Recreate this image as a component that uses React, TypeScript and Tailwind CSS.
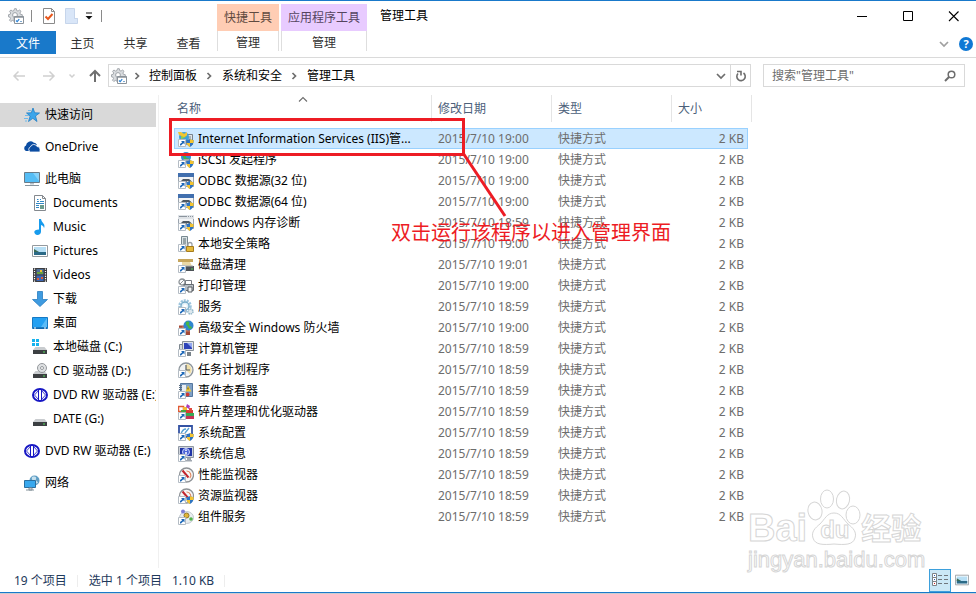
import type { ReactNode } from "react";

const Svg = ({ children, box = "0 0 16 16", className = "h-4 w-4" }: { children: ReactNode; box?: string; className?: string }) => (
  <svg viewBox={box} className={`shrink-0 ${className}`} fill="none" aria-hidden="true">
    {children}
  </svg>
);

/* ---------- shared icon parts ---------- */

const Shortcut = () => (
  <g>
    <path d="M.5 8.500h7v7h-7z" fill="#fff" stroke="#b4bcc4" />
    <path d="M3 10h3.500v3.500l-1.200-1.200L3 14.500H2V13l2.200-1.800z" fill="#1d68b8" />
  </g>
);

const Shield = () => (
  <g>
    <path d="M12 8c1 .8 2.200 1 3.700 1 0 3.600-1 5.600-3.700 7-2.700-1.400-3.700-3.400-3.700-7 1.500 0 2.700-.2 3.700-1z" fill="#2f74c0" />
    <path d="M12 8c1 .8 2.200 1 3.700 1l-.2 3H12zM12 12v4c-2-1-3.100-2.200-3.500-4z" fill="#f4c430" />
  </g>
);

const AdminGear = () => (
  <Svg>
    <path
      d="M6.500.7h1.800l.4 1.900 1.300.5 1.700-1.100 1.300 1.300-1.100 1.700.5 1.300 1.900.4V9H6v4.300l-1.600-.9-1.600 1.100-1.300-1.300 1-1.700-.5-1.300-1.500-.4V6.700l1.600-.4.6-1.300-1.100-1.700L2.900 2l1.700 1.100 1.300-.5z"
      fill="#d9dcdf"
      stroke="#9da2a7"
      strokeWidth=".9"
    />
    <circle cx="7" cy="7" r="2.400" fill="#fff" stroke="#9da2a7" />
    <path d="M6.500 8.500h9v7h-9z" fill="#fff" stroke="#8b9299" />
    <path d="M6.500 9h9" stroke="#8b9299" strokeWidth="1.500" />
    <path d="M8 12.500l1.200 1.200 2-2.500" stroke="#2b83d6" strokeWidth="1.200" />
    <path d="M12 13.500h2" stroke="#7fa9d0" />
  </Svg>
);

const Chevron = ({ dir, className }: { dir: "right" | "down" | "up"; className: string }) => (
  <Svg box="0 0 10 10" className={`h-[10px] w-[10px] ${className}`}>
    <path
      d={dir === "right" ? "M3.500 2l3 3-3 3" : dir === "down" ? "M1 3l4 4 4-4" : "M1 6.500l4-4 4 4"}
      stroke="currentColor"
      strokeWidth={dir === "up" ? 1.1 : 1.7}
    />
  </Svg>
);

/* ---------- file icons ---------- */

const WindowFrame = ({ bar }: { bar: string }) => (
  <g>
    <path d="M.5.5h15v13H.5z" fill="#f2f4f6" stroke="#9aa3ad" />
    <path d="M0 0h16v4H0z" fill={bar} />
    <path d="M3 8l2-2h6l3 2.500-2 .5-3-1-1 2-2-1z" fill="#4d5863" />
  </g>
);

const Dial = () => (
  <g>
    <circle cx="8.500" cy="8" r="7" fill="#f7f7f7" stroke="#8e9296" strokeWidth="1.300" />
    <path d="M8.500 4a4.200 4.200 0 0 1 3.300 7" stroke="#e08a62" strokeWidth="1.200" />
    <path d="M4.500 3.500l6 7" stroke="#c2242c" strokeWidth="2" />
  </g>
);

const fileArt: Record<string, ReactNode> = {
  iis: (
    <>
      <path d="M8.500 3.500h6v10h-6z" fill="#dfe5e9" stroke="#77838d" />
      <path d="M10 6h3M10 8h3" stroke="#77838d" />
      <circle cx="6" cy="6" r="5" fill="#3fa0dc" />
      <path d="M3 3c3-1 5 0 5 2S4 7 3 9z" fill="#8fcb4e" />
      <path d="M0 1h3l3 2 3-2v3.500L6 6 1 4z" fill="#f4c430" />
      <Shortcut />
      <Shield />
    </>
  ),
  iscsi: (
    <>
      <circle cx="8" cy="5" r="5" fill="#3390d6" />
      <path d="M5 1c3-.5 4 1 3 3s2 2 4 3c-2 3-4 3-5 1S4 5 5 1z" fill="#42b54a" />
      <path d="M5 7h6l2 4-3 2z" fill="#9aa7b2" />
      <Shortcut />
      <Shield />
    </>
  ),
  odbc: (
    <>
      <WindowFrame bar="#416fae" />
      <Shortcut />
      <Shield />
    </>
  ),
  memory: (
    <>
      <WindowFrame bar="#dfe3e7" />
      <path d="M1 1.500h8M10 1.500h1M12 1.500h1M14 1.500h1" stroke="#8b949d" />
      <Shortcut />
      <Shield />
    </>
  ),
  policy: (
    <>
      <path d="M3.500.5h6v12h-6z" fill="#dbe3e6" stroke="#788990" />
      <path d="M5 3h3M5 5h3M5 7h3" stroke="#55666d" />
      <path d="M10 10.500V8.500a2 2 0 0 1 4 0v2" stroke="#9aa0a5" strokeWidth="1.300" />
      <path d="M8.500 10.500h7v5h-7z" fill="#e5b93a" stroke="#a67c1e" />
      <Shortcut />
    </>
  ),
  cleanup: (
    <>
      <path d="M0 2h15v3H0z" fill="#c6a65c" />
      <path d="M4 5h8l2 4H4z" fill="#e9d8a7" />
      <path d="M7 9h9v5H7z" fill="#4d5257" />
      <path d="M8 9h7" stroke="#aab0b5" />
      <path d="M13 12h2" stroke="#55d05b" />
      <Shortcut />
    </>
  ),
  print: (
    <>
      <circle cx="4" cy="4" r="3" fill="#fff" stroke="#8b9196" strokeWidth="1.300" />
      <path d="M2 6l4-4" stroke="#8b9196" />
      <path d="M7.500 2.500h6v4h-6z" fill="#fff" stroke="#777d83" />
      <path d="M6 6.500h9.500v6H6z" fill="#b8bfc5" stroke="#666d73" />
      <path d="M10 9h4v5h-4z" fill="#f1f3f4" stroke="#565d63" />
      <Shortcut />
    </>
  ),
  services: (
    <>
      <circle cx="7" cy="7" r="5.500" stroke="#9cc4dd" strokeWidth="2.500" strokeDasharray="2 1" />
      <circle cx="7" cy="7" r="4" fill="#e0eff7" stroke="#76abc9" strokeWidth="1.300" />
      <circle cx="7" cy="7" r="1.800" fill="#fff" />
      <circle cx="12.500" cy="12.500" r="2.500" fill="#dde8ee" stroke="#92b7ca" strokeWidth="1.500" strokeDasharray="1.500 .7" />
      <Shortcut />
    </>
  ),
  firewall: (
    <>
      <path d="M1 5.500h11V15H1z" fill="#a34a37" />
      <path d="M1 8h11M1 11h11M5 5.500V8M9 8v3M6 11v3" stroke="#d99a85" strokeWidth=".7" />
      <circle cx="10.500" cy="5.500" r="5" fill="#2f86cf" />
      <path d="M8 2c3-1 4 0 3 2s3 2 3 4c-2 2-4 0-4-1S7 5 8 2z" fill="#46b548" />
      <Shortcut />
    </>
  ),
  computer: (
    <>
      <path d="M1.500 3.500h4v8h-4z" fill="#d4dade" stroke="#7c868e" />
      <path d="M4.500.5h11v9h-11z" fill="#dfe3e8" stroke="#8a929a" />
      <path d="M6 2h8v6H6z" fill="#2d43b8" />
      <path d="M9 2h5v5z" fill="#92a7f0" />
      <path d="M9 11h4v4H9z" fill="#78828a" />
      <Shortcut />
    </>
  ),
  tasks: (
    <>
      <circle cx="8" cy="8" r="7" fill="#f1f3f4" stroke="#8c949b" strokeWidth="1.300" />
      <path d="M8 8V2a6 6 0 0 1 4 10z" fill="#f0dfa8" />
      <path d="M8 3v5h4" stroke="#55606a" strokeWidth="1.200" />
      <Shortcut />
    </>
  ),
  events: (
    <>
      <path d="M2.500.5h12v13h-12z" fill="#7fa0c6" stroke="#55779f" />
      <path d="M4 2h4v11H4z" fill="#e9eef3" />
      <path d="M1 2.500h3M1 4.500h3M1 6.500h3" stroke="#586b80" />
      <path d="M10 2.500l3.500 6h-6z" fill="#f3ca35" />
      <path d="M10 4.500v2" stroke="#5c4a0c" />
      <circle cx="9.500" cy="11.500" r="2" fill="#cf3b36" />
      <Shortcut />
    </>
  ),
  defrag: (
    <>
      <path d="M.5 2.500h5v5h-5z" fill="#fff" stroke="#e05a33" strokeWidth="1.500" />
      <path d="M5 3h4v5H5z" fill="#f1ba35" />
      <path d="M9 0l3 2-1 3-3-2z" fill="#a93ec0" />
      <path d="M3 6h5v3H3z" fill="#46a442" />
      <path d="M8 6h7v4H8z" fill="#d93a34" />
      <path d="M8 9h8v3H8z" fill="#38a855" />
      <path d="M8 12h8v3H8z" fill="#c83258" />
      <path d="M11 4h3v3h-3z" fill="#e14a3f" />
      <Shortcut />
    </>
  ),
  config: (
    <>
      <path d="M1 1h13v11H1z" fill="#fff" stroke="#3453a4" strokeWidth="1.800" />
      <path d="M3 9c1-3 3-5 5-5M7 8l4-5" stroke="#55a0d4" strokeWidth="1.300" />
      <Shortcut />
      <Shield />
    </>
  ),
  info: (
    <>
      <path d="M.5.5h15v11H.5z" fill="#cfd4dc" stroke="#8f97a2" />
      <path d="M2 2h12v8H2z" fill="#2135a6" />
      <circle cx="8" cy="6" r="3.500" fill="#4b64d8" stroke="#c9d3ff" />
      <path d="M8 3.500V5M8 6v2.500" stroke="#fff" strokeWidth="1.500" />
      <path d="M9 12h4v2h1v1.500H8V14h1z" fill="#a0a7b0" />
      <Shortcut />
    </>
  ),
  perf: (
    <>
      <Dial />
      <Shortcut />
    </>
  ),
  resource: (
    <>
      <Dial />
      <Shortcut />
      <Shield />
    </>
  ),
  component: (
    <>
      <ellipse cx="8.500" cy="8.500" rx="7" ry="6" fill="#e9edf0" stroke="#c0c8cf" />
      <circle cx="5" cy="2.500" r="2" fill="#7d7fd6" />
      <circle cx="8.500" cy="6.500" r="2.500" fill="#e3b534" stroke="#8d762e" />
      <circle cx="13" cy="10" r="1.800" fill="#52b34b" />
      <Shortcut />
    </>
  ),
};

/* ---------- sidebar icons ---------- */

const drive = (
  <g>
    <path d="M3.500 8h9l2.500 3H1z" fill="#c9cccf" />
    <path d="M1 11h14v4H1z" fill="#3c3f42" />
    <path d="M11 13h2" stroke="#53dc5a" />
  </g>
);

const dvd = (
  <g>
    <ellipse cx="8" cy="8" rx="7" ry="6" fill="#fff" stroke="#1717c4" strokeWidth="2" />
    <path d="M7 2v12L2 8z" fill="#fff" />
    <path d="M6.500 2v12M9.500 2v12" stroke="#1717c4" />
    <path d="M6 4L2.500 8 6 12M10 4l3.500 4-3.500 4" stroke="#1717c4" strokeWidth=".8" />
  </g>
);

const sideArt: Record<string, ReactNode> = {
  star: (
    <>
      <path d="M9 1l1.700 4.800 4.800.2-4 3 1.500 5.500-4.200-3.200-4.300 3.200 1.700-5.500-3.700-3 4.800-.2z" fill="#3aa5ea" stroke="#1f7fc6" strokeWidth=".8" />
      <path d="M4 3.500h3M1 8.500h4M0 11.500h4M1 14h2" stroke="#6db9ea" />
    </>
  ),
  cloud: (
    <>
      <path d="M2 12a3 3 0 0 1 0-5.500A4.500 4.500 0 0 1 9.500 3.500 4 4 0 0 1 13 6l-6 1-2 5z" fill="#0c4da2" />
      <path d="M6.500 13a2.800 2.800 0 0 1 0-5.200 3.500 3.500 0 0 1 6.500-.3 2.800 2.800 0 0 1 3 2.700V13z" fill="#0c4da2" stroke="#fff" strokeWidth=".8" />
    </>
  ),
  pc: (
    <>
      <path d="M.5 1.500h15v10H.5z" fill="#55bdf5" stroke="#697b88" />
      <path d="M9 2h6v8z" fill="#86d2fa" />
      <path d="M6 12h4v1.500H6z" fill="#b5c0c8" />
      <path d="M1 14.500h14" stroke="#87939c" />
    </>
  ),
  doc: (
    <>
      <path d="M2.500.5h8l3 3v12h-11z" fill="#fff" stroke="#84898e" />
      <path d="M10.500.5v3h3" stroke="#84898e" />
      <path d="M5 6.500h2M8 4.500h1M5 4.500h1.500M8 6.500h4M4 8.500h8M4 10.500h3M4 12.500h3" stroke="#3288c4" />
      <path d="M8 10h4v4H8z" fill="#6b9b8c" />
    </>
  ),
  music: (
    <path d="M7 0h2c.5 4 5 4.500 3 9.500 0-2-1.200-3-3-3.500v6.500c0 2-1.500 3.500-3.500 3.500S2.300 14.500 2.300 13 4 10.500 7 10.500z" fill="#179bed" />
  ),
  pic: (
    <>
      <path d="M.5 2.500h15v11H.5z" fill="#fff" stroke="#949a9f" />
      <path d="M2 4h12v8H2z" fill="#b7dff5" />
      <path d="M2 8l5 1 7 0v3H2z" fill="#2c6a87" />
      <path d="M2 6l5 3H2z" fill="#3b6b54" />
    </>
  ),
  video: (
    <>
      <path d="M1 1h14v14H1z" fill="#3d3d3f" />
      <path d="M2.500 1.500v14M13.500 1.500v14" stroke="#fff" strokeWidth="1.200" strokeDasharray="1.200 1.200" />
      <path d="M4.500 2h7v5.500h-7z" fill="#51719a" />
      <path d="M4.500 8.500h7V14h-7z" fill="#3c66b4" />
      <path d="M5 5h6v2H5z" fill="#6aa13d" />
      <path d="M8 3h2v2H8z" fill="#efc02f" />
      <path d="M5 11h2v2H5zM9 10h2v2H9z" fill="#d95c36" />
    </>
  ),
  down: <path d="M5.500.5h5v8h5L8 15.500.5 8.500h5z" fill="#3f9be0" stroke="#2a7dc0" strokeWidth=".8" />,
  desktop: (
    <>
      <path d="M.5 2.500h15v11H.5z" fill="#23a0f2" stroke="#1679c4" />
      <path d="M15 3v9H9z" fill="#5bbcf8" />
      <path d="M1 13h14" stroke="#0e5794" />
      <path d="M2 13h2M12 13h2" stroke="#fff" />
    </>
  ),
  winDrive: (
    <>
      {drive}
      <path d="M0 0h3v3H0zM4 0h3v3H4zM0 4h3v3H0zM4 4h3v3H4z" fill="#16b3ee" />
    </>
  ),
  cdDrive: (
    <>
      {drive}
      <circle cx="10" cy="5" r="4.500" fill="#dfe1e3" stroke="#94989c" />
      <circle cx="10" cy="5" r="1.500" fill="#fff" stroke="#94989c" />
    </>
  ),
  dvd,
  drive,
  network: (
    <>
      <circle cx="10.500" cy="5.500" r="5" fill="#5e9dc4" />
      <path d="M8 2c3-1 5 0 4 2s2 2 2 4c-2 1-4 0-4-1S7 5 8 2z" fill="#c5e0ee" />
      <path d="M.5 5.500h11v7H.5z" fill="#38a8ee" stroke="#2a6f9f" />
      <path d="M2 15h8M5 13h3v2H5z" stroke="#84919a" />
    </>
  ),
};

/* ---------- data ---------- */

const files = [
  ["iis", "Internet Information Services (IIS)管...", "2015/7/10 19:00"],
  ["iscsi", "iSCSI 发起程序", "2015/7/10 19:00"],
  ["odbc", "ODBC 数据源(32 位)", "2015/7/10 19:00"],
  ["odbc", "ODBC 数据源(64 位)", "2015/7/10 19:00"],
  ["memory", "Windows 内存诊断", "2015/7/10 18:59"],
  ["policy", "本地安全策略", "2015/7/10 19:00"],
  ["cleanup", "磁盘清理", "2015/7/10 19:01"],
  ["print", "打印管理", "2015/7/10 19:00"],
  ["services", "服务", "2015/7/10 18:59"],
  ["firewall", "高级安全 Windows 防火墙", "2015/7/10 19:00"],
  ["computer", "计算机管理", "2015/7/10 18:59"],
  ["tasks", "任务计划程序", "2015/7/10 18:59"],
  ["events", "事件查看器", "2015/7/10 18:59"],
  ["defrag", "碎片整理和优化驱动器", "2015/7/10 18:59"],
  ["config", "系统配置", "2015/7/10 18:59"],
  ["info", "系统信息", "2015/7/10 18:59"],
  ["perf", "性能监视器", "2015/7/10 18:59"],
  ["resource", "资源监视器", "2015/7/10 18:59"],
  ["component", "组件服务", "2015/7/10 18:59"],
];

type Place = [icon: string, label: string];
const groups: { root: Place; children: Place[] }[] = [
  { root: ["star", "快速访问"], children: [] },
  { root: ["cloud", "OneDrive"], children: [] },
  {
    root: ["pc", "此电脑"],
    children: [
      ["doc", "Documents"],
      ["music", "Music"],
      ["pic", "Pictures"],
      ["video", "Videos"],
      ["down", "下载"],
      ["desktop", "桌面"],
      ["winDrive", "本地磁盘 (C:)"],
      ["cdDrive", "CD 驱动器 (D:)"],
      ["dvd", "DVD RW 驱动器 (E:)"],
      ["drive", "DATE (G:)"],
    ],
  },
  { root: ["dvd", "DVD RW 驱动器 (E:)"], children: [] },
  { root: ["network", "网络"], children: [] },
];

/* ---------- sections ---------- */

const TitleBar = () => (
  <header className="flex h-[30px] items-stretch">
    <div className="flex w-[217px] items-center pl-2">
      <AdminGear />
      <span className="ml-[7px] h-3 w-px bg-[#8a8a8a]" />
      <button aria-label="属性" className="ml-[10px]">
        <Svg>
          <path d="M1.500.5h8l3 3v12h-11z" fill="#fff" stroke="#8a8a8a" />
          <path d="M9.500.5v3h3" stroke="#8a8a8a" />
          <path d="M3.500 8.500l2.500 2.500 4.500-5" stroke="#e8571c" strokeWidth="2" />
        </Svg>
      </button>
      <button aria-label="新建文件夹" className="ml-[7px]">
        <Svg>
          <path d="M.5.5h9v10h3v5H.5z" fill="#d9e6f8" stroke="#c6d5eb" />
          <path d="M9.500 1v9.500h3V15" stroke="#c6d5eb" />
        </Svg>
      </button>
      <button aria-label="自定义快速访问工具栏" className="ml-[4px]">
        <Svg box="0 0 8 8" className="h-2 w-2">
          <path d="M1 1h6" stroke="#111" />
          <path d="M.5 4h7L4 7.500z" fill="#111" />
        </Svg>
      </button>
      <span className="ml-2 h-3 w-px bg-[#8a8a8a]" />
    </div>
    <div className="mt-[3px] flex w-[62px] items-center justify-center bg-[#ffcdb4] text-[#5f4a40]">快捷工具</div>
    <div className="mt-[3px] ml-0.5 flex w-[86px] items-center justify-center bg-[#e8cbff] text-[#55455f]">应用程序工具</div>
    <h1 className="ml-[13px] leading-[30px]">管理工具</h1>
    <div className="ml-auto flex">
      <button aria-label="最小化" className="flex w-[46px] items-center justify-center">
        <Svg box="0 0 11 11" className="h-[11px] w-[11px]">
          <path d="M1 5.500h10" stroke="#000" />
        </Svg>
      </button>
      <button aria-label="最大化" className="flex w-[46px] items-center justify-center">
        <Svg box="0 0 11 11" className="h-[11px] w-[11px]">
          <path d="M1.500.5h9v9h-9z" stroke="#000" />
        </Svg>
      </button>
      <button aria-label="关闭" className="flex w-[46px] items-center justify-center">
        <Svg box="0 0 11 11" className="h-[11px] w-[11px]">
          <path d="M1 .5l9.500 9.500M10.500.5L1 10" stroke="#000" strokeWidth="1.100" />
        </Svg>
      </button>
    </div>
  </header>
);

const Ribbon = () => (
  <nav className="flex h-[27px] items-start border-b border-[#dadada] text-[#2f2f2f]">
    <button className="h-[23px] w-14 bg-[#1979ca] pt-0.5 text-white">文件</button>
    <button className="h-[23px] w-[53px] pt-0.5">主页</button>
    <button className="h-[23px] w-[53px] pt-0.5">共享</button>
    <button className="h-[23px] w-[53px] pt-0.5">查看</button>
    <button className="ml-0.5 h-[20px] w-[62px] border-x border-[#dedede] pt-1">管理</button>
    <button className="ml-0.5 h-[20px] w-[86px] border-x border-[#dedede] pt-1">管理</button>
    <div className="mt-[6px] mr-[3px] ml-auto flex items-center gap-[10px]">
      <button aria-label="展开功能区" className="text-[#a0a0a0]">
        <Chevron dir="down" className="" />
      </button>
      <button aria-label="帮助" className="flex h-[14px] w-[14px] items-center justify-center rounded-full bg-[#0f78d4] text-[11px] font-bold text-white">
        ?
      </button>
    </div>
  </nav>
);

const AddressBar = () => (
  <div className="flex h-[37px] items-center pr-[11px] pb-0.5 text-black">
    <div className="flex w-[108px] items-center pl-3">
      <button aria-label="后退">
        <Svg className="h-[14px] w-[14px]" box="0 0 14 14">
          <path d="M13 7H2M6.500 2.500L2 7l4.500 4.500" stroke="#d0d0d0" strokeWidth="1.500" />
        </Svg>
      </button>
      <button aria-label="前进" className="ml-4">
        <Svg className="h-[14px] w-[14px]" box="0 0 14 14">
          <path d="M1 7h11M7.500 2.500L12 7l-4.500 4.500" stroke="#d0d0d0" strokeWidth="1.500" />
        </Svg>
      </button>
      <button aria-label="最近位置" className="ml-3 text-[#d0d0d0]">
        <Svg box="0 0 8 8" className="h-2 w-2">
          <path d="M1.500 2.500L4 5l2.500-2.500" stroke="currentColor" strokeWidth="1.500" />
        </Svg>
      </button>
      <button aria-label="上移" className="ml-3">
        <Svg className="h-[14px] w-[14px]" box="0 0 14 14">
          <path d="M7 13V2M2 7l5-5 5 5" stroke="#6f6f6f" strokeWidth="2" />
        </Svg>
      </button>
    </div>
    <div className="flex h-[23px] min-w-0 flex-1 items-center border border-[#d9d9d9] pl-0.5">
      <AdminGear />
      <Chevron dir="right" className="ml-[5px] text-[#6d6d6d]" />
      <button className="ml-[7px]">控制面板</button>
      <Chevron dir="right" className="ml-[7px] text-[#6d6d6d]" />
      <button className="ml-2">系统和安全</button>
      <Chevron dir="right" className="ml-[7px] text-[#6d6d6d]" />
      <button className="ml-2">管理工具</button>
      <button aria-label="历史记录" className="mr-1 ml-auto text-[#6d6d6d]">
        <Chevron dir="down" className="" />
      </button>
      <button aria-label="刷新" className="flex h-full w-5 items-center justify-center border-l border-[#d9d9d9]">
        <Svg box="0 0 12 12" className="h-3 w-3">
          <path d="M8.500 3A4.200 4.200 0 1 1 3 3.500" stroke="#6d6d6d" strokeWidth="1.600" />
          <path d="M2 1.500h4v4" stroke="#6d6d6d" strokeWidth="1.600" />
        </Svg>
      </button>
    </div>
    <label className="ml-3 flex h-[23px] w-[202px] items-center border border-[#d9d9d9] pr-2 pl-2">
      <input
        aria-label="搜索"
        placeholder={'搜索"管理工具"'}
        className="w-0 min-w-0 flex-1 bg-transparent outline-none placeholder:text-[#6d6d6d]"
      />
      <Svg box="0 0 12 12" className="h-3 w-3">
        <circle cx="7.500" cy="4.500" r="3.300" stroke="#6d6d6d" strokeWidth="1.500" />
        <path d="M5 7l-4 4" stroke="#6d6d6d" strokeWidth="2" />
      </Svg>
    </label>
  </div>
);

const SideItem = ({ place, nested, active }: { place: Place; nested?: boolean; active?: boolean }) => (
  <a
    href="#"
    className={`flex h-6 items-center overflow-hidden whitespace-nowrap ${nested ? "pl-8" : "pl-6"} ${active ? "bg-[#d9d9d9]" : ""}`}
  >
    <Svg className="mr-[5px] h-4 w-4">{sideArt[place[0]]}</Svg>
    {place[1]}
  </a>
);

const Sidebar = () => (
  <nav className="flex w-[159px] shrink-0 flex-col gap-2 border-r border-[#f0f0f0] pt-2 pr-0.5 text-black">
    {groups.map((g, i) => (
      <div key={i}>
        <SideItem place={g.root} active={i === 0} />
        {g.children.map((c) => (
          <SideItem key={c[1]} place={c} nested />
        ))}
      </div>
    ))}
  </nav>
);

const FileTable = () => (
  <table className="w-[578px] table-fixed border-separate border-spacing-0 text-left">
    <colgroup>
      <col className="w-[258px]" />
      <col className="w-[120px]" />
      <col className="w-[120px]" />
      <col className="w-[76px]" />
      <col className="w-1" />
    </colgroup>
    <thead className="text-[#4c607a]">
      <tr>
        <th className="relative h-[27px] border-r border-[#e5e5e5] p-0 pl-[3px] font-normal">
          <button>名称</button>
          <Chevron dir="up" className="absolute top-0 left-1/2 -translate-x-1/2 text-[#6d6d6d]" />
        </th>
        <th className="border-r border-[#e5e5e5] p-0 pl-[6px] font-normal">
          <button>修改日期</button>
        </th>
        <th className="border-r border-[#e5e5e5] p-0 pl-[6px] font-normal">
          <button>类型</button>
        </th>
        <th colSpan={2} className="border-r border-[#e5e5e5] p-0 pl-[6px] font-normal">
          <button>大小</button>
        </th>
      </tr>
      <tr>
        <td colSpan={5} className="h-[6px] p-0" />
      </tr>
    </thead>
    <tbody className="text-[#6d6d6d]">
      {files.map(([icon, name, date], i) => {
        const cell = i === 0 ? "h-[21px] border-y border-[#99d1ff] bg-[#cce8ff]" : "h-[21px]";
        return (
          <tr key={name}>
            <td className={`p-0 ${cell} ${i === 0 ? "border-l pl-[3px]" : "pl-1"}`}>
              <span className="flex items-center whitespace-nowrap text-black">
                <Svg className="mr-1 h-4 w-4">{fileArt[icon]}</Svg>
                {name}
              </span>
            </td>
            <td className={`p-0 pl-[6px] ${cell}`}>{date}</td>
            <td className={`p-0 pl-[6px] ${cell}`}>快捷方式</td>
            <td className={`p-0 text-right ${cell} ${i === 0 ? "border-r pr-[3px]" : "pr-1"}`}>2 KB</td>
            <td className="p-0" />
          </tr>
        );
      })}
    </tbody>
  </table>
);

/* Red call-out drawn over the list */
const Callout = () => (
  <div className="pointer-events-none absolute top-[23px] left-[10px] text-[#ed1c24]">
    <div className="h-[38px] w-[296px] border-[3px] border-current" />
    <svg className="absolute top-[34px] left-[292px] h-[66px] w-[48px]" viewBox="0 0 48 66" fill="none" aria-hidden="true">
      <path d="M2 1l42 63" stroke="currentColor" strokeWidth="3" />
    </svg>
    <p className="absolute top-[101px] left-[222px] text-[20px] leading-7 whitespace-nowrap">双击运行该程序以进入管理界面</p>
  </div>
);

const Watermark = () => (
  <div className="pointer-events-none absolute right-[52px] bottom-[-6px] w-[176px] font-bold whitespace-nowrap text-white [-webkit-text-stroke:1px_#d6d6d6]">
    <div className="flex h-[60px] items-end">
      <span className="font-['Liberation_Sans'] text-[38px] leading-[36px]">Bai</span>
      <span className="relative h-[60px] w-[54px]">
        <svg viewBox="0 0 54 60" className="h-[60px] w-[54px]" fill="#fff" stroke="#d6d6d6" aria-hidden="true">
          <ellipse cx="8" cy="25" rx="7" ry="9" transform="rotate(-10 8 25)" />
          <ellipse cx="20" cy="13" rx="6.500" ry="9" />
          <ellipse cx="36" cy="14" rx="6.500" ry="9" transform="rotate(12 36 14)" />
          <ellipse cx="46" cy="29" rx="7" ry="9" />
          <path d="M27 27c7 0 9 6 14 11 5 4 9 8 7 14-2 7-10 7-21 6-11 1-19 1-21-6-2-6 2-10 7-14 5-5 7-11 14-11z" />
        </svg>
        <span className="absolute bottom-1 left-[13px] font-['Liberation_Sans'] text-[24px] leading-6">du</span>
      </span>
      <span className="text-[30px] leading-[36px]">经验</span>
    </div>
    <p className="font-['Liberation_Sans'] text-[22px] leading-7 font-normal">jingyan.baidu.com</p>
  </div>
);

const StatusBar = () => (
  <footer className="flex h-[24px] items-center pl-[14px] text-[#1e395b]">
    <div className="flex items-center pt-0.5">
      <span>19 个项目</span>
      <span className="ml-[10px] h-3 w-px bg-[#ededed]" />
      <span className="ml-[11px]">选中 1 个项目</span>
      <span className="ml-[10px]">1.10 KB</span>
      <span className="ml-[10px] h-3 w-px bg-[#ededed]" />
    </div>
    <div className="mr-[7px] ml-auto flex items-center gap-1">
      <button aria-label="详细信息" className="flex h-[23px] w-[22px] items-center justify-center border border-[#3da0dc] bg-[#cbe8f6]">
        <Svg>
          <path d="M.5 1.500h4v4h-4zM.5 5.500h4v4h-4zM.5 9.500h4v4h-4z" fill="#fff" stroke="#7c8287" />
          <path d="M2 3.500h1" stroke="#285bb5" />
          <path d="M2 7.500h1" stroke="#285bb5" />
          <path d="M2 11.500h1" stroke="#c22" />
          <path d="M6 3.500h4M12 3.500h4M6 7.500h4M12 7.500h4M6 11.500h4M12 11.500h4" stroke="#70777d" />
        </Svg>
      </button>
      <button aria-label="大缩略图">
        <Svg className="h-[14px] w-[14px]">{sideArt.pic}</Svg>
      </button>
    </div>
  </footer>
);

export default function App() {
  return (
    <div className="flex min-h-screen flex-col bg-[#c9cdd1] pb-px font-['Noto_Sans','Noto_Sans_CJK_SC',sans-serif] text-[12px] leading-4">
      <div className="flex flex-1 flex-col border-y border-[#1979ca] bg-white">
        <TitleBar />
        <Ribbon />
        <AddressBar />
        <div className="flex flex-1">
          <Sidebar />
          <main className="relative min-w-0 flex-1 pl-[15px]">
            <FileTable />
            <Callout />
            <Watermark />
          </main>
        </div>
        <StatusBar />
      </div>
    </div>
  );
}
